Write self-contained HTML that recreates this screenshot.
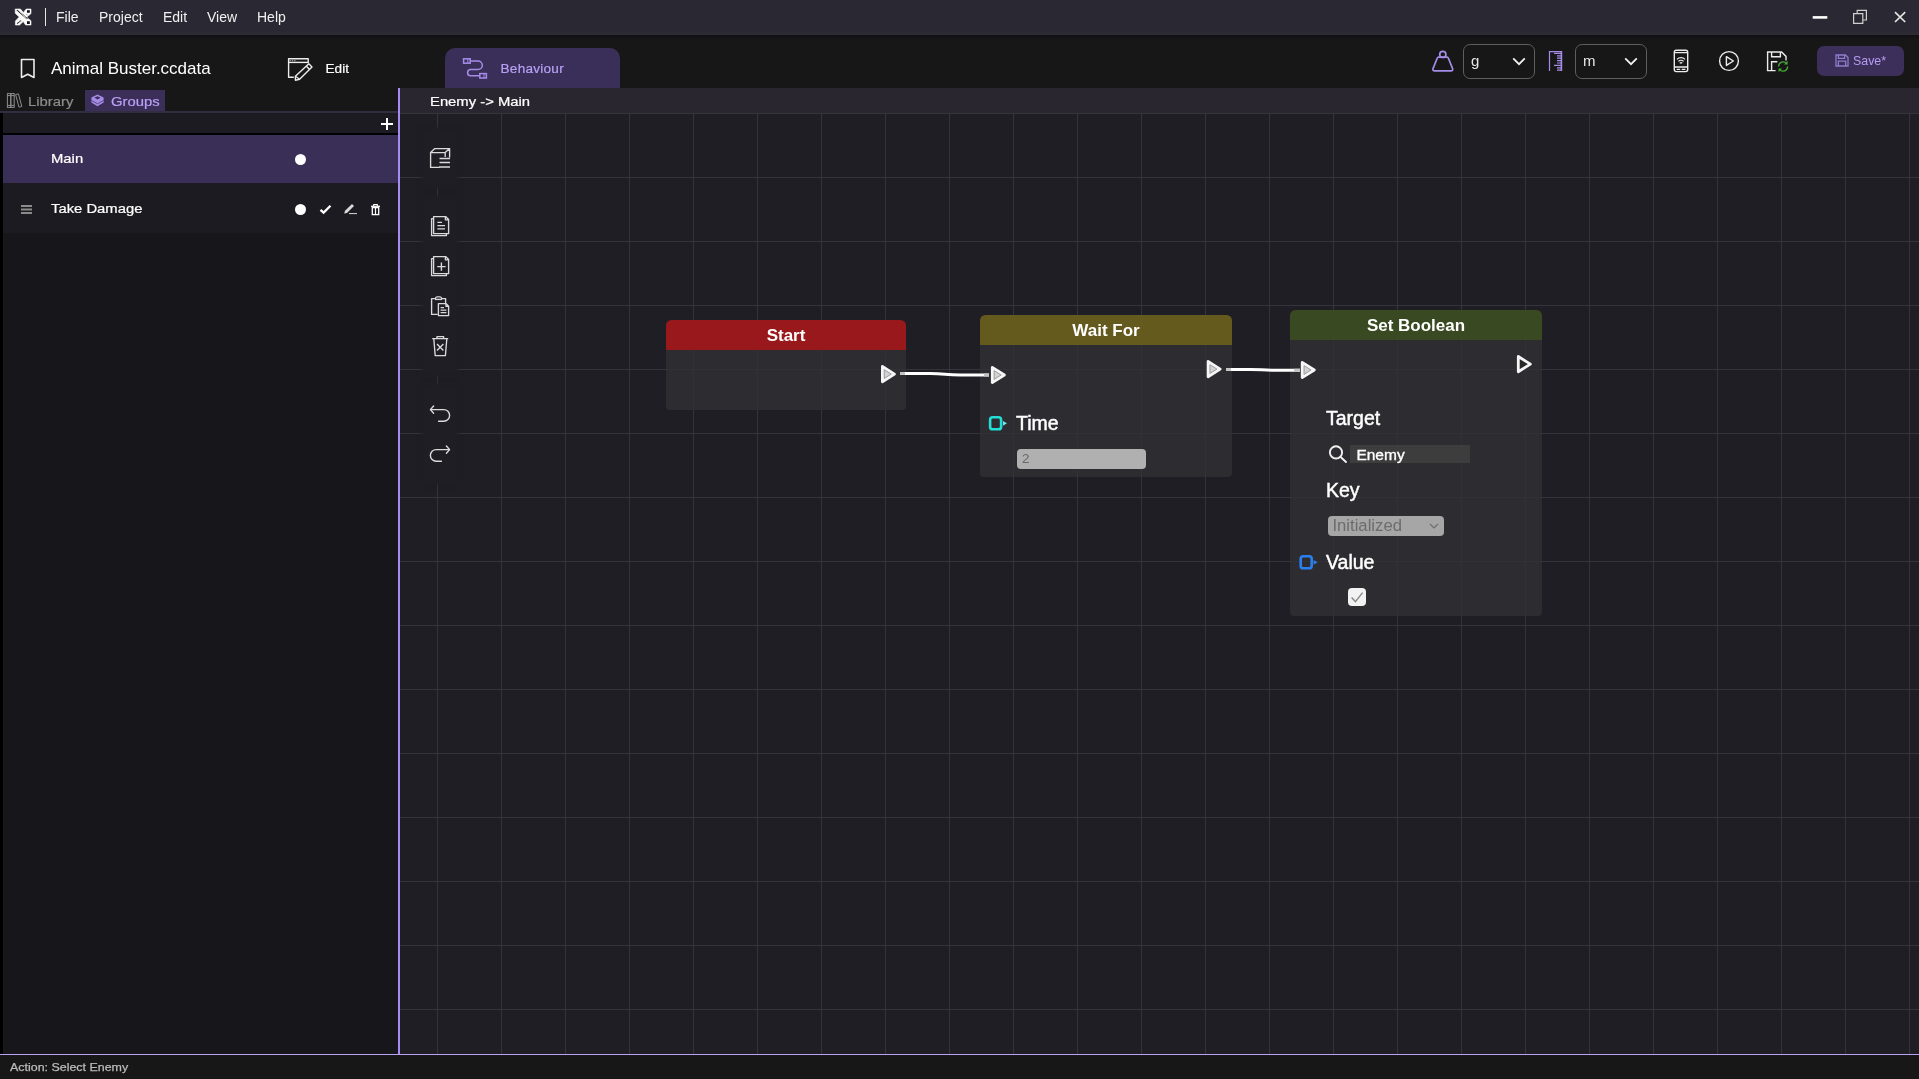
<!DOCTYPE html>
<html><head><meta charset="utf-8"><title>Behaviour Editor</title>
<style>
*{box-sizing:border-box;margin:0;padding:0}
html,body{width:1919px;height:1079px;overflow:hidden;background:#18171a;font-family:"Liberation Sans",sans-serif;color:#fff}
.abs{position:absolute}
#titlebar{position:absolute;left:0;top:0;width:1919px;height:35px;background:linear-gradient(to bottom,#2a2832 0,#2a2832 32px,#2e2c35 34px,#2c2a33 35px);z-index:5;box-shadow:0 1px 2.5px 0.5px #121116}
#titlebar .menu{position:absolute;top:0;height:35px;line-height:35px;font-size:14px;color:#f0f0f0}
#header{position:absolute;left:0;top:35px;width:1919px;height:53px;background:#171717}
#left{position:absolute;left:0;top:88px;width:398px;height:966px;background:#17161b}
#vline{position:absolute;left:398px;top:88px;width:2px;height:966px;background:#a68cf2}
#canvas{position:absolute;left:400px;top:88px;width:1519px;height:966px;background:#1f1e25;overflow:hidden}
#status{position:absolute;left:0;top:1053.6px;width:1919px;height:26px;background:#171717;border-top:1.4px solid #b8a2f4}
#status span{position:absolute;left:10px;top:5.8px;font-size:11px;line-height:14px;color:#bcbcbc;transform:scaleX(1.13);transform-origin:0 0;white-space:nowrap;-webkit-text-stroke:0.25px #bcbcbc}
.node{position:absolute;border-radius:5.5px 5.5px 4px 4px;overflow:hidden}
.node .hd{height:30px;line-height:31px;text-align:center;font-weight:bold;font-size:17px;color:#fff}
.node .bd{position:absolute;left:0;right:0;top:30px;bottom:0;background:rgba(50,50,52,0.78)}
.lbl{position:absolute;font-size:19.5px;color:#fff;line-height:20px;white-space:nowrap;-webkit-text-stroke:0.45px #fff}
.tb{position:absolute;left:24px;width:32px;background:#1f1e25;box-shadow:0 0 4px 2px #1f1e25}
.wf{font-size:13.6px!important;line-height:18px;transform:scaleX(1.09);transform-origin:0 0;-webkit-text-stroke:0.22px currentColor;white-space:nowrap}
</style></head><body style="will-change:transform">
<div id="titlebar">
 <svg class="abs" style="left:14px;top:8px" width="18" height="18" viewBox="0 0 18 18"><path d="M1.2 1 H6.4 L9.4 4.4 L12.2 1 H17 V5.6 L12.6 9.2 L17 12.8 V17 H11.6 L9.2 13.6 L5.6 17 H1.4 V13 L5.2 9 L1.2 5.2 Z" fill="#fafafa" stroke="#fafafa" stroke-width="0.6" stroke-linejoin="round"/><path d="M3 2.2 L13.4 10.8" stroke="#15131a" stroke-width="1.4" stroke-dasharray="0.9 0.55" fill="none"/><path d="M3.2 15.6 L7 12.6" stroke="#15131a" stroke-width="1.3" stroke-dasharray="0.9 0.55" fill="none"/><rect x="13" y="2.2" width="2.8" height="2.6" fill="#15131a"/><rect x="13" y="13.2" width="2.8" height="2.8" fill="#15131a"/><path d="M12.4 6 L13.4 7.2" stroke="#77757c" stroke-width="0.8"/></svg>
 <div class="abs" style="left:45px;top:8px;width:1px;height:18px;background:#e6e6e6"></div>
 <svg class="abs" style="left:1806px;top:6px" width="106" height="24" viewBox="0 0 106 24"><g fill="none"><path d="M6.7 11.4 H21.3" stroke="#fff" stroke-width="2.6"/><path d="M47.6 7.6 H56.8 V17.4 H47.6 Z M51.2 7.4 V4.4 H60.4 V14 H57.2" stroke="#cfcfcf" stroke-width="1.2"/><path d="M89 6.2 L99.2 16 M99.2 6.2 L89 16" stroke="#e4e4e4" stroke-width="1.7"/></g></svg>
 <span class="menu" style="left:56px">File</span>
 <span class="menu" style="left:99px">Project</span>
 <span class="menu" style="left:163px">Edit</span>
 <span class="menu" style="left:207px">View</span>
 <span class="menu" style="left:257px">Help</span>
</div>
<div id="header">
 <svg class="abs" style="left:20px;top:22.5px" width="16" height="22" viewBox="0 0 16 22"><path d="M1.5 1.5 H14 V19.5 L7.75 16.2 L1.5 19.5 Z" fill="none" stroke="#ececec" stroke-width="1.6" stroke-linejoin="round"/></svg>
 <div class="abs" id="projname" style="left:51px;top:23.8px;font-size:17px;line-height:20px;color:#fff;white-space:nowrap">Animal Buster.ccdata</div>
 <svg class="abs" style="left:287px;top:22px" width="27" height="26" viewBox="0 0 27 26"><g fill="none" stroke="#ececec" stroke-width="1.4" stroke-linejoin="round"><path d="M21.2 6 V1.7 H1.6 V20.3 H6.8"/><path d="M1.6 5.4 H21.2"/><path d="M2.6 3.5 H9.6" stroke-width="1.6" stroke-dasharray="1.3 1" stroke="#9a9a9a"/><path d="M21.8 6.8 L25 10 L12.6 22.2 L8.4 23.2 L8.4 19.2 Z"/><path d="M19.4 9.2 L22.6 12.4"/><path d="M8.4 19.2 L12.6 22.2" stroke-width="1.1"/></g></svg>
 <div class="abs" id="edit" style="left:325.5px;top:25.6px;font-size:13.6px;line-height:16px;color:#fff;-webkit-text-stroke:0.2px #fff">Edit</div>
 <div class="abs" style="left:445px;top:13px;width:175px;height:40px;background:#3a2f58;border-radius:10px 10px 0 0"></div>
 <svg class="abs" style="left:462px;top:22px" width="26" height="23" viewBox="0 0 26 23"><g fill="none" stroke="#a58ce8" stroke-width="1.5"><rect x="1.6" y="1.8" width="6.6" height="4.4"/><path d="M5.8 1.8 V6.2" stroke-width="1"/><path d="M8.2 4 H16 A4.3 4.3 0 0 1 16 12.6 H8.7 A3.1 3.1 0 0 0 8.7 18.8 H17.6"/><rect x="17.8" y="16.6" width="6.6" height="4.4"/><path d="M22 16.6 V21" stroke-width="1"/></g></svg>
 <div class="abs" id="behav" style="left:500.5px;top:25.9px;font-size:13.6px;letter-spacing:0.25px;line-height:16px;color:#b9a0f5;-webkit-text-stroke:0.2px #b9a0f5">Behaviour</div>
 <svg class="abs" style="left:1431px;top:14px" width="24" height="24" viewBox="0 0 24 24"><g fill="none" stroke="#a58ce8" stroke-width="1.7" stroke-linejoin="round"><circle cx="11.8" cy="5.4" r="3.1"/><path d="M7.6 8.2 H16 Q17 8.2 17.4 9.2 L21.6 19.6 Q22.2 21.8 20 21.8 H3.6 Q1.4 21.8 2 19.6 L6.2 9.2 Q6.6 8.2 7.6 8.2 Z"/></g></svg>
 <div class="abs" style="left:1463px;top:9px;width:72px;height:35px;border:1px solid #5e5e5e;border-radius:7px"></div>
 <div class="abs" style="left:1471px;top:17px;font-size:15px;line-height:18px;color:#e8e8e8">g</div>
 <svg class="abs" style="left:1512px;top:22px" width="14" height="9" viewBox="0 0 14 9"><path d="M1.2 1.4 L7 7.2 L12.8 1.4" fill="none" stroke="#f0f0f0" stroke-width="1.8"/></svg>
 <svg class="abs" style="left:1548px;top:15px" width="15" height="22" viewBox="0 0 15 22"><g fill="none" stroke="#a58ce8"><path d="M1.5 21 V1.6 H13" stroke-width="1.2"/><path d="M13.4 1 V21" stroke-width="1.6"/><path d="M6 3.4 H13 M9 5.8 H13 M9 8.2 H13 M9 10.6 H13 M9 13 H13 M6 15.4 H13 M9 17.8 H13 M9 20.2 H13" stroke-width="1.2"/></g></svg>
 <div class="abs" style="left:1575px;top:9px;width:72px;height:35px;border:1px solid #5e5e5e;border-radius:7px"></div>
 <div class="abs" style="left:1583px;top:17px;font-size:15px;line-height:18px;color:#e8e8e8">m</div>
 <svg class="abs" style="left:1624px;top:22px" width="14" height="9" viewBox="0 0 14 9"><path d="M1.2 1.4 L7 7.2 L12.8 1.4" fill="none" stroke="#f0f0f0" stroke-width="1.8"/></svg>
 <svg class="abs" style="left:1672px;top:13px" width="18" height="25" viewBox="0 0 18 25"><g fill="none" stroke="#ececec" stroke-width="1.4"><rect x="2.3" y="2.2" width="13.4" height="21.4" rx="2"/><path d="M2.3 4.6 H15.7 M2.3 19 H15.7 M4.6 21.4 H8.2 M9.8 21.4 H13.4"/><path d="M4.9 11.4 A5.9 5.9 0 0 1 13.1 11.4 M6.4 13.4 A3.7 3.7 0 0 1 11.6 13.4 M7.8 15.3 A1.7 1.7 0 0 1 10.2 15.3" stroke-width="1.25"/></g></svg>
 <svg class="abs" style="left:1717px;top:14px" width="24" height="24" viewBox="0 0 24 24"><g fill="none" stroke="#ececec" stroke-width="1.4" stroke-linejoin="round"><circle cx="12" cy="12" r="9.4"/><path d="M9.4 7.6 L16.4 12 L9.4 16.4 Z"/></g></svg>
 <svg class="abs" style="left:1765px;top:14px" width="26" height="24" viewBox="0 0 26 24"><g fill="none" stroke="#ececec" stroke-width="1.4"><path d="M10.6 21.6 H2.6 V3 H16.6 L21 7.4 V11.4"/><path d="M6.6 3 V7.8 H15.4 V3"/><path d="M6.6 21.6 V12.8 H12.4"/></g><g fill="none" stroke="#43ab34" stroke-width="1.35"><path d="M13.6 17.6 A4.6 4.6 0 0 1 21.6 14.4"/><path d="M22.6 17.4 A4.6 4.6 0 0 1 14.6 20.6"/></g><path d="M22.6 11.8 V15.4 H19 Z M13.6 23 V19.4 H17.2 Z" fill="#43ab34"/></svg>
 <div class="abs" style="left:1817px;top:11px;width:87px;height:30px;background:#3c305b;border-radius:7px"></div>
 <svg class="abs" style="left:1835px;top:19px" width="14" height="13" viewBox="0 0 14 13"><g fill="none" stroke="#917bcc" stroke-width="1.3"><path d="M1 12 V1 H10.4 L13 3.6 V12 Z"/><path d="M3.4 1 V4.4 H9.6 V1"/><path d="M3.4 12 V7.2 H10.6 V12"/></g></svg>
 <div class="abs" style="left:1853px;top:19px;font-size:12.4px;line-height:15px;color:#b49cf2">Save*</div>
</div>
<div id="left">
 <div class="abs" style="left:0;top:25px;width:2.5px;height:941px;background:#000"></div>
 <div class="abs" style="left:0;top:0;width:398px;height:23px;background:#181718"></div>
 <div class="abs" style="left:85px;top:2px;width:80px;height:22px;background:#3b2f5a"></div>
 <svg class="abs" style="left:6px;top:4px" width="18" height="17" viewBox="0 0 18 17"><g fill="none" stroke="#8c8c8c" stroke-width="1"><rect x="1.4" y="1.6" width="3.4" height="13.8"/><rect x="4.8" y="1.6" width="3.4" height="13.8"/><path d="M1.4 3.6 H8.2 M1.4 13.4 H8.2"/><path d="M9.6 2.6 L12.4 1.8 L15.8 14.4 L13 15.2 Z"/></g></svg>
 <svg class="abs" style="left:90px;top:6px" width="15" height="13" viewBox="0 0 15 13"><path d="M7.5 0.6 L13.6 3.6 V8.6 L7.5 12.2 L1.4 8.6 V3.6 Z" fill="#a58ce8"/><path d="M4.4 3.8 L7.5 2.2 L10.6 3.8 L7.5 5.6 Z" fill="#3b2f5a"/><path d="M1.4 6.4 L7.5 9.8 L13.6 6.4" fill="none" stroke="#3b2f5a" stroke-width="0.7"/></svg>
 <div class="abs wf" id="lib" style="left:27.5px;top:4.7px;font-size:15px;line-height:18px;color:#8c8c8c">Library</div>
 <div class="abs wf" id="grp" style="left:110.5px;top:4.7px;font-size:15px;line-height:18px;color:#b9a0f5">Groups</div>
 <div class="abs" style="left:0;top:23px;width:398px;height:2px;background:#322e42"></div>
 <div class="abs" style="left:3px;top:25px;width:395px;height:20px;background:#1c1b22"></div>
 <div class="abs" style="left:3px;top:45px;width:395px;height:2px;background:#000"></div>
 <svg class="abs" style="left:380px;top:29px" width="14" height="14" viewBox="0 0 14 14"><path d="M7 1 V13 M1 7 H13" stroke="#fff" stroke-width="2"/></svg>
 <div class="abs" style="left:3px;top:47px;width:395px;height:48px;background:#3a2f56"></div>
 <div class="abs wf" id="main" style="left:51px;top:62.4px;font-size:15px;line-height:18px;color:#fff;">Main</div>
 <div class="abs" style="left:294.8px;top:65.8px;width:11.5px;height:11.5px;border-radius:5.75px;background:#fff"></div>
 <div class="abs" style="left:3px;top:95px;width:395px;height:50px;background:#1c1b21"></div>
 <div class="abs" style="left:21px;top:117px;width:11px;height:2px;background:#8a8a8a;box-shadow:0 3.5px 0 #8a8a8a,0 7px 0 #8a8a8a"></div>
 <div class="abs wf" id="take" style="left:51px;top:112.4px;font-size:15px;line-height:18px;color:#fff;">Take Damage</div>
 <div class="abs" style="left:294.8px;top:115.8px;width:11.5px;height:11.5px;border-radius:5.75px;background:#fff"></div>
 <svg class="abs" style="left:319px;top:116px" width="13" height="11" viewBox="0 0 13 11"><path d="M1.5 5.8 L4.6 8.6 L11.5 1.8" fill="none" stroke="#fff" stroke-width="2.3"/></svg>
 <svg class="abs" style="left:343px;top:115px" width="15" height="12" viewBox="0 0 15 12"><path d="M1.2 10.6 L2 7.8 L9 1 L11 3 L4 9.9 Z" fill="#d8d8d8"/><path d="M6 10.6 H14" stroke="#d8d8d8" stroke-width="1"/></svg>
 <svg class="abs" style="left:370px;top:115px" width="11" height="13" viewBox="0 0 11 13"><g fill="none" stroke="#fff"><path d="M1 3.3 H10" stroke-width="1.3"/><path d="M3.7 3 V1.5 H7.3 V3" stroke-width="1.1"/><rect x="2.3" y="4.6" width="6.4" height="7" stroke-width="1.3"/><path d="M5.5 5 V11.4" stroke-width="1.2"/></g></svg>
</div>
<div id="vline"></div>
<div id="canvas">
 <div class="abs" style="left:0;top:25px;width:1519px;height:941px;background-image:linear-gradient(to right,#35343b 1px,transparent 1px),linear-gradient(to bottom,#35343b 1px,transparent 1px);background-size:64px 64px;background-position:37px 0px"></div>
 <div class="abs" style="left:0;top:0;width:1519px;height:25px;background:#29262f"></div>
 <div class="abs wf" id="crumb" style="left:30px;top:4.7px;color:#fff">Enemy -&gt; Main</div>
 <!-- toolbar -->
 <div class="tb" style="top:42px;height:56px"></div>
 <div class="tb" style="top:110px;height:176px"></div>
 <div class="tb" style="top:298px;height:96px"></div>
 <svg class="abs" style="left:0;top:0" width="1519" height="966" viewBox="400 88 1519 966"><g fill="none" stroke="#dadada" stroke-width="1.35" stroke-linejoin="round">
  <!-- cube settings -->
  <path d="M439.5 167.4 H430.6 V152.6 L434.8 148.6 H449.6 V157.4 M430.6 152.6 H445.2 L449.6 148.6 M445.2 152.6 V157"/>
  <path d="M439.5 158.6 H450 M439.5 162.6 H450 M439 167 H450" stroke-width="1.5"/>
  <!-- copy -->
  <path d="M433.6 216.6 H445.6 L448.6 219.6 V233.6 H433.6 Z M445.4 216.8 V219.8 H448.4"/>
  <path d="M433.4 218.6 H431.6 V235.6 H446.4 V233.8"/>
  <path d="M437.4 222.4 H442 M437.4 225.6 H445 M437.4 228.8 H445"/>
  <!-- duplicate -->
  <path d="M433.6 256.6 H445.6 L448.6 259.6 V273.6 H433.6 Z M445.4 256.8 V259.8 H448.4"/>
  <path d="M433.4 258.6 H431.6 V275.6 H446.4 V273.8"/>
  <path d="M441.4 262.4 V270.8 M437.2 266.6 H445.6" stroke-width="1.4"/>
  <!-- paste -->
  <path d="M437.6 314.4 H431.6 V298.6 H435.4 Q435.6 297 437 296.8 H440 Q441.6 297 441.8 298.6 H445.6 V303"/>
  <path d="M435 299.4 H442"/>
  <path d="M438.4 303.6 H446 L448.6 306.2 V315.6 H438.4 Z M446 303.8 V306.4 H448.4"/>
  <path d="M440.6 307.6 H444 M440.6 310.2 H446.4 M440.6 312.6 H446.4" stroke-width="1.3"/>
  <!-- trash -->
  <path d="M432.2 338.6 H448.2 M437 338.4 V336.6 H443.6 V338.4 M433.8 338.8 L435.2 355.6 H445.4 L446.8 338.8"/>
  <path d="M437 344 L443.4 350.4 M443.4 344 L437 350.4" stroke-width="1.4"/>
  <!-- undo -->
  <path d="M433.6 406 L430.4 409.6 L433.6 413.2 M430.6 409.6 H443.8 A5.8 5.8 0 0 1 443.8 421.2 H438.6" stroke-width="1.4" stroke-linecap="round"/>
  <!-- redo -->
  <path d="M446.4 446 L449.6 449.6 L446.4 453.2 M449.4 449.6 H436.2 A5.8 5.8 0 0 0 436.2 461.2 H441.4" stroke-width="1.4" stroke-linecap="round"/>
 </g></svg>
 <!-- Start node -->
 <div class="node" style="left:266px;top:232px;width:240px;height:90px">
  <div class="hd" style="background:rgba(156,24,28,0.97)">Start</div><div class="bd"></div>
 </div>
 <!-- Wait For node -->
 <div class="node" style="left:580px;top:227px;width:252px;height:162px">
  <div class="hd" style="background:rgba(103,93,29,0.96)">Wait For</div><div class="bd"></div>
  <div class="lbl" style="left:36px;top:98px">Time</div>
  <div class="abs" style="left:37px;top:134px;width:129px;height:20px;background:#b0b0b0;border-radius:4px;font-size:13.5px;line-height:20px;color:#696969;padding-left:5px">2</div>
 </div>
 <!-- Set Boolean node -->
 <div class="node" style="left:890px;top:222px;width:252px;height:306px">
  <div class="hd" style="background:rgba(58,75,34,0.96)">Set Boolean</div><div class="bd"></div>
  <div class="lbl" style="left:36px;top:98px">Target</div>
  <div class="abs" style="left:60px;top:135px;width:120px;height:18px;background:#3d3d3d;font-size:15.5px;line-height:20px;color:#fff;padding-left:6.4px;-webkit-text-stroke:0.35px #fff">Enemy</div>
  <div class="lbl" style="left:36px;top:170px">Key</div>
  <div class="abs" style="left:38px;top:206px;width:116px;height:20px;background:#a6a6a6;border-radius:4px;font-size:16.7px;line-height:20px;color:#6c6c6c;padding-left:4.4px">Initialized</div>
  <div class="lbl" style="left:36px;top:241.5px">Value</div>
  <div class="abs" style="left:58px;top:278px;width:18px;height:18px;background:#f2f2f2;border-radius:4px"></div>
 </div>
 <!-- ports and connections -->
 <svg class="abs" style="left:0;top:0" width="1519" height="966" viewBox="400 88 1519 966">
  <path d="M900 373.6 H930 C945 373.6 945 375 960 375 H989" stroke="#fff" stroke-width="3" fill="none"/>
  <path d="M900 373.6 H905 M984 375 H989" stroke="#c4c4c4" stroke-width="3" fill="none"/>
  <path d="M1226 369.4 H1250 C1262 369.4 1262 370.2 1275 370.2 H1300" stroke="#fff" stroke-width="3" fill="none"/>
  <path d="M1226 369.4 H1231 M1294 370.2 H1300" stroke="#c4c4c4" stroke-width="3" fill="none"/>
  <path d="M882.4 366.5 L894.5 374.1 L882.4 381.7 Z" fill="#d2d2d2" stroke="#f6f6f6" stroke-width="2.8" stroke-linejoin="round"/><path d="M884.3 369.8 L891.2 374.1 L884.3 378.4 Z" fill="none" stroke="#9a9a9a" stroke-width="0.9" stroke-linejoin="round"/>
  <path d="M992.3 367.4 L1004.4 375.0 L992.3 382.6 Z" fill="#d2d2d2" stroke="#f6f6f6" stroke-width="2.8" stroke-linejoin="round"/><path d="M994.2 370.7 L1001.1 375.0 L994.2 379.3 Z" fill="none" stroke="#9a9a9a" stroke-width="0.9" stroke-linejoin="round"/>
  <path d="M1208.1 361.5 L1220.2 369.1 L1208.1 376.7 Z" fill="#d2d2d2" stroke="#f6f6f6" stroke-width="2.8" stroke-linejoin="round"/><path d="M1210.0 364.8 L1216.9 369.1 L1210.0 373.4 Z" fill="none" stroke="#9a9a9a" stroke-width="0.9" stroke-linejoin="round"/>
  <path d="M1302.2 362.4 L1314.3 370.0 L1302.2 377.6 Z" fill="#d2d2d2" stroke="#f6f6f6" stroke-width="2.8" stroke-linejoin="round"/><path d="M1304.1 365.7 L1311.0 370.0 L1304.1 374.3 Z" fill="none" stroke="#9a9a9a" stroke-width="0.9" stroke-linejoin="round"/>
  <path d="M1518.3 356.5 L1530.4 364.1 L1518.3 371.7 Z" fill="#29292a" stroke="#f6f6f6" stroke-width="2.8" stroke-linejoin="round"/>
  <rect x="990.1" y="417.3" width="11" height="12" rx="2.6" fill="none" stroke="#22ded6" stroke-width="2.6"/><path d="M1003.0 420.9 L1007.0 423.3 L1003.0 425.7 Z" fill="#6ee9ee"/>
  <rect x="1300.7" y="556.3" width="11" height="12" rx="2.6" fill="none" stroke="#2a80ee" stroke-width="2.6"/><path d="M1313.6 559.9 L1317.6 562.3 L1313.6 564.7 Z" fill="#2a80ee"/>
  <g fill="none" stroke="#f0f0f0" stroke-width="1.9" stroke-linecap="round"><circle cx="1336" cy="452.4" r="6.1"/><path d="M1340.6 457 L1346 462"/></g>
  <path d="M1430 524 L1434 528 L1438 524" fill="none" stroke="#6e6e6e" stroke-width="1.2"/>
  <path d="M1351.6 597.6 L1355.4 601.6 L1362.6 592.6" fill="none" stroke="#8a8a8a" stroke-width="1.5"/>
 </svg>
</div>
<div id="status"><span>Action: Select Enemy</span></div>
</body></html>
